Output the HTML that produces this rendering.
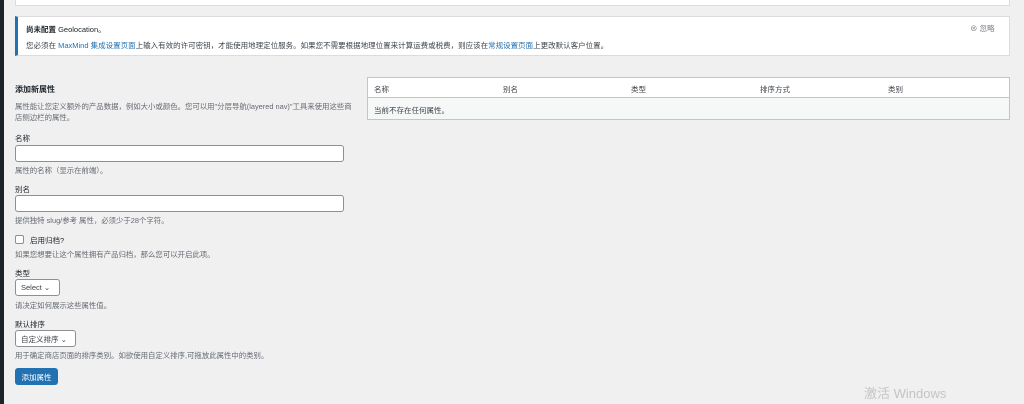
<!DOCTYPE html>
<html style="overflow:hidden;height:404px"><head><meta charset="utf-8"><style>
*{box-sizing:border-box;margin:0;padding:0}
body{width:1024px;height:404px;overflow:hidden;background:#f0f0f1;font-family:"Liberation Sans","Noto Sans CJK SC",sans-serif;font-size:7.5px;color:#3c434a;position:relative}
.a{position:absolute}
.lbar{left:0;top:0;width:4px;height:404px;background:#1d2327}
.top{left:15px;top:-2px;width:995px;height:8px;background:#fff;border:1px solid #dcdcde}
.notice{left:15px;top:16px;width:995px;height:40px;background:#fff;border:1px solid #dcdcde;border-left:3px solid #2271b1}
a{color:#2271b1;text-decoration:none}
.inp{left:15px;width:329px;height:17px;background:#fff;border:1px solid #8c8f94;border-radius:3px}
.sel{left:15px;height:17px;background:#fff;border:1px solid #8c8f94;border-radius:3px;font-size:7.5px;padding:3px 0 0 5px}
.desc{color:#646970;font-size:7.4px}
.tbl{left:367px;top:77px;width:643px;height:43px;background:#f6f7f7;border:1px solid #c3c4c7}
.th{position:absolute;top:0;left:0;right:0;height:20px;background:#fff;border-bottom:1px solid #c3c4c7}
</style></head><body>
<div class="a lbar"></div>
<div class="a top"></div>
<div class="a notice">
<div class="a" style="left:8px;top:7px;font-weight:bold;color:#1d2327">尚未配置 <span style="font-weight:normal">Geolocation。</span></div>
<div class="a" style="left:8px;top:23px;white-space:nowrap">您必须在 <a>MaxMind 集成设置页面</a>上输入有效的许可密钥，才能使用地理定位服务。如果您不需要根据地理位置来计算运费或税费，则应该在<a>常规设置页面</a>上更改默认客户位置。</div>
<div class="a" style="left:952px;top:6px;color:#787c82">⊗ 忽略</div>
</div>
<div class="a" style="left:15px;top:84px;font-size:8px;font-weight:bold;color:#1d2327">添加新属性</div>
<div class="a desc" style="left:15px;top:101px;width:342px;line-height:11px">属性能让您定义额外的产品数据，例如大小或颜色。您可以用"分层导航(layered nav)"工具来使用这些商店侧边栏的属性。</div>
<div class="a" style="left:15px;top:133px;color:#1d2327">名称</div>
<div class="a inp" style="top:145px"></div>
<div class="a desc" style="left:15px;top:165px">属性的名称（显示在前端）。</div>
<div class="a" style="left:15px;top:184px;color:#1d2327">别名</div>
<div class="a inp" style="top:195px"></div>
<div class="a desc" style="left:15px;top:215px">提供独特 slug/参考 属性，必须少于28个字符。</div>
<div class="a" style="left:15px;top:235px;width:9px;height:9px;background:#fff;border:1px solid #8c8f94;border-radius:2px"></div>
<div class="a" style="left:30px;top:235px;color:#1d2327">启用归档?</div>
<div class="a desc" style="left:15px;top:249px">如果您想要让这个属性拥有产品归档，那么您可以开启此项。</div>
<div class="a" style="left:15px;top:268px;color:#1d2327">类型</div>
<div class="a sel" style="top:279px;width:45px">Select ⌄</div>
<div class="a desc" style="left:15px;top:300px">请决定如何展示这些属性值。</div>
<div class="a" style="left:15px;top:319px;color:#1d2327">默认排序</div>
<div class="a sel" style="top:330px;width:61px">自定义排序 ⌄</div>
<div class="a desc" style="left:15px;top:350px">用于确定商店页面的排序类别。如欲使用自定义排序,可拖放此属性中的类别。</div>
<div class="a" style="left:15px;top:368px;width:43px;height:17px;background:#2271b1;border-radius:3px;color:#fff;text-align:center;padding-top:4px">添加属性</div>
<div class="a tbl"><div class="th">
<span class="a" style="left:6px;top:6px">名称</span><span class="a" style="left:135px;top:6px">别名</span><span class="a" style="left:263px;top:6px">类型</span><span class="a" style="left:392px;top:6px">排序方式</span><span class="a" style="left:520px;top:6px">类别</span></div>
<span class="a" style="left:6px;top:27px">当前不存在任何属性。</span></div>
<div class="a" style="left:864px;top:383px;font-size:13px;color:#c4c4c4">激活 Windows</div>
</body></html>
